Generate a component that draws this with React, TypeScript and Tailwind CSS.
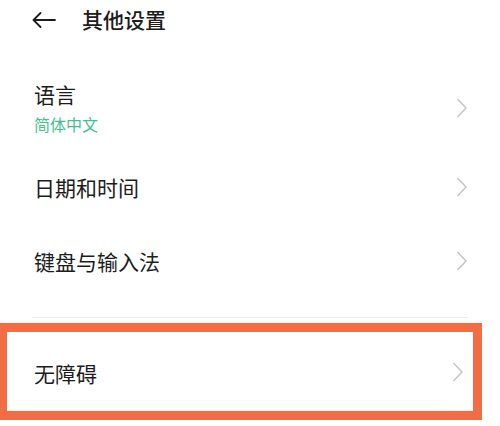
const Chevron = () => (
  <svg width="12" height="20" viewBox="0 0 12 20" fill="none" className="shrink-0">
    <path d="M2 1.5 L10 10 L2 18.5" stroke="#c6c6c6" strokeWidth="1.6" strokeLinecap="round" strokeLinejoin="round" />
  </svg>
);

const BackArrow = () => (
  <svg width="24" height="16" viewBox="0 0 24 16" fill="none" className="shrink-0">
    <path d="M23 8 H1.5 M8.5 1 L1.5 8 L8.5 15" stroke="#1c1c1c" strokeWidth="1.8" strokeLinecap="round" strokeLinejoin="round" />
  </svg>
);

const Row = ({ title, subtitle, className }: { title: string; subtitle?: string; className?: string }) => (
  <div className={"flex items-center justify-between pl-[34px] pr-[32px] " + (className ?? "")}>
    <div className="flex flex-col">
      <span className="text-[21px] leading-[26px] text-[#1c1c1c]">{title}</span>
      {subtitle && <span className="text-[16px] leading-[22px] mt-[6px] text-[#45bf8c]">{subtitle}</span>}
    </div>
    <Chevron />
  </div>
);

export default function App() {
  return (
    <div
      className="w-[500px] h-[426px] bg-white overflow-hidden flex flex-col"
      style={{ fontFamily: '"Noto Sans CJK SC", "Noto Sans", sans-serif' }}
    >
      <div className="h-[40px] flex items-center pl-[32px] gap-[26px]">
        <BackArrow />
        <span className="text-[21px] font-medium text-[#1c1c1c]">其他设置</span>
      </div>
      <Row title="语言" subtitle="简体中文" className="h-[84px] mt-[26px]" />
      <Row title="日期和时间" className="h-[74px]" />
      <Row title="键盘与输入法" className="h-[74px]" />
      <div className="h-px bg-[#ececec] mt-[19px] ml-[32px] mr-[32px]" />
      <div className="mt-[5px] w-[482px] h-[97px] border-[9px] border-l-[7px] border-[#f26d43] flex items-center justify-between pl-[27px] pr-[9px]">
        <span className="text-[21px] leading-[26px] text-[#1c1c1c] mt-[2px]">无障碍</span>
        <Chevron />
      </div>
    </div>
  );
}
